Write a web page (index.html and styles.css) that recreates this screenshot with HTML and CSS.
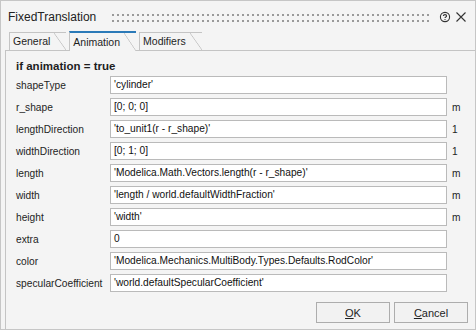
FILE: index.html
```html
<!DOCTYPE html>
<html>
  <head>
    <meta charset="utf-8" />
    <title>FixedTranslation</title>
    <link rel="stylesheet" href="styles.css">
  </head>

  <body>
    <div class="dialog">
      <div class="titlebar">
        <span class="title">FixedTranslation</span>
        <svg class="grip" height="8">
          <defs>
            <pattern id="dots" width="5" height="6" patternUnits="userSpaceOnUse">
              <rect width="2" height="2" fill="#9a9a9a" />
            </pattern>
          </defs>
          <rect width="100%" height="8" fill="url(#dots)" />
        </svg>
        <svg class="icon" width="12" height="12" viewBox="0 0 12 12">
          <circle cx="6" cy="6" r="4.6" fill="none" stroke="#333" stroke-width="1.1" />
          <path d="M4.4 4.9 C4.4 3.2 7.6 3.2 7.6 4.9 C7.6 6 6 6 6 7.1" fill="none" stroke="#333" stroke-width="1.1" />
          <rect x="5.5" y="8" width="1" height="1" fill="#333" />
        </svg>
        <svg class="icon close" width="12" height="12" viewBox="0 0 12 12">
          <path d="M1.5 1.5 L10.5 10.5 M10.5 1.5 L1.5 10.5" stroke="#333" stroke-width="1.1" />
        </svg>
      </div>

      <div class="tabs">
        <div class="tab">General</div>
        <div class="tab active">Animation</div>
        <div class="tab">Modifiers</div>
      </div>

      <div class="pane">
        <div class="section">if animation = true</div>
        <div class="params">
          <label>shapeType</label>
          <div class="field">'cylinder'</div>
          <span class="unit"></span>

          <label>r_shape</label>
          <div class="field">[0; 0; 0]</div>
          <span class="unit">m</span>

          <label>lengthDirection</label>
          <div class="field">'to_unit1(r - r_shape)'</div>
          <span class="unit">1</span>

          <label>widthDirection</label>
          <div class="field">[0; 1; 0]</div>
          <span class="unit">1</span>

          <label>length</label>
          <div class="field">'Modelica.Math.Vectors.length(r - r_shape)'</div>
          <span class="unit">m</span>

          <label>width</label>
          <div class="field">'length / world.defaultWidthFraction'</div>
          <span class="unit">m</span>

          <label>height</label>
          <div class="field">'width'</div>
          <span class="unit">m</span>

          <label>extra</label>
          <div class="field">0</div>
          <span class="unit"></span>

          <label>color</label>
          <div class="field">'Modelica.Mechanics.MultiBody.Types.Defaults.RodColor'</div>
          <span class="unit"></span>

          <label>specularCoefficient</label>
          <div class="field">'world.defaultSpecularCoefficient'</div>
          <span class="unit"></span>
        </div>

        <div class="buttons">
          <button><u>O</u>K</button>
          <button><u>C</u>ancel</button>
        </div>
      </div>
    </div>
  </body>
</html>
```

FILE: styles.css
```css
* {
  margin: 0;
  padding: 0;
  box-sizing: border-box;
}

body {
  font-family: "Liberation Sans", Arial, sans-serif;
  font-size: 10.2px;
  color: #1e1e1e;
  background-color: #f4f4f4;
}

.dialog {
  width: 476px;
  height: 330px;
  border: 1px solid #c6c6c6;
  background-color: #f4f4f4;
  display: flex;
  flex-direction: column;
}

/* title bar */

.titlebar {
  height: 30px;
  display: flex;
  align-items: center;
  padding: 2px 8px 0 7px;
}

.title {
  font-size: 12px;
  color: #222;
}

.grip {
  flex: 1;
  margin: 1px 7px 0 16px;
}

.icon {
  display: block;
}

.close {
  margin-left: 4px;
}

/* tabs */

.tabs {
  display: flex;
  align-items: flex-end;
  height: 19px;
  padding-left: 8px;
}

.tab {
  position: relative;
  height: 18px;
  line-height: 17px;
  padding: 0 16px 0 3px;
  margin-right: 3px;
  border-left: 1px solid #c4c4c4;
  border-top: 1px solid #c4c4c4;
  font-size: 10.5px;
}

.tab::after {
  content: "";
  position: absolute;
  right: 0;
  top: 0;
  width: 12px;
  height: 100%;
  background: linear-gradient(to top right, transparent calc(50% - 0.7px), #c4c4c4 50%, transparent calc(50% + 0.7px));
}

.tab.active {
  height: 20px;
  line-height: 18px;
  margin-bottom: -1px;
  border-top: 2px solid #2b7ab8;
  background-color: #f4f4f4;
  z-index: 1;
}

/* pane */

.pane {
  flex: 1;
  margin-left: 4px;
  border-top: 1px solid #c4c4c4;
  border-left: 1px solid #c4c4c4;
  padding: 8px 7px 0 10px;
  display: flex;
  flex-direction: column;
}

.section {
  font-weight: bold;
  font-size: 11.5px;
  line-height: 14px;
  margin-bottom: 3px;
}

.params {
  display: grid;
  grid-template-columns: 94px 337px auto;
  grid-auto-rows: 18px;
  row-gap: 4px;
  align-items: center;
}

.field {
  height: 18px;
  line-height: 16px;
  padding-left: 3px;
  border: 1px solid #bababa;
  background-color: #fff;
  color: #111;
  white-space: nowrap;
  overflow: hidden;
}

.unit {
  padding-left: 5px;
}

.buttons {
  display: flex;
  justify-content: flex-end;
  gap: 4px;
  margin-top: 10px;
}

.buttons button {
  width: 74px;
  height: 21px;
  font-family: "Liberation Sans", Arial, sans-serif;
  font-size: 11px;
  color: #1e1e1e;
  border: 1px solid #adadad;
  background-color: #f2f2f2;
}
```
